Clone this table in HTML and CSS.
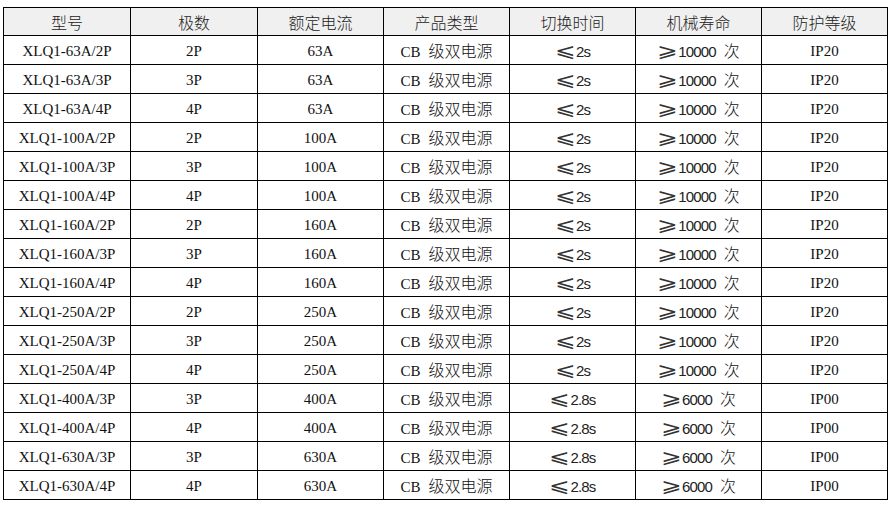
FILE: index.html
```html
<!DOCTYPE html>
<html lang="zh-CN">
<head>
<meta charset="utf-8">
<title>XLQ1 双电源参数表</title>
<link rel="stylesheet" href="styles.css">
</head>
<body>
<table class="spec">
  <colgroup>
    <col class="c1"><col class="c2"><col class="c3"><col class="c4"><col class="c5"><col class="c6"><col class="c7">
  </colgroup>
  <thead>
    <tr><th>型号</th><th>极数</th><th>额定电流</th><th>产品类型</th><th>切换时间</th><th>机械寿命</th><th>防护等级</th></tr>
  </thead>
  <tbody>
    <tr><td class="lat">XLQ1-63A/2P</td><td class="lat">2P</td><td class="lat">63A</td><td><span class="lat">CB</span><span class="gap"></span><span class="zh">级双电源</span></td><td><span class="sym">⩽</span><span class="num">2s</span></td><td><span class="sym">⩾</span><span class="num">10000</span><span class="gap"></span><span class="zh">次</span></td><td class="lat">IP20</td></tr>
    <tr><td class="lat">XLQ1-63A/3P</td><td class="lat">3P</td><td class="lat">63A</td><td><span class="lat">CB</span><span class="gap"></span><span class="zh">级双电源</span></td><td><span class="sym">⩽</span><span class="num">2s</span></td><td><span class="sym">⩾</span><span class="num">10000</span><span class="gap"></span><span class="zh">次</span></td><td class="lat">IP20</td></tr>
    <tr><td class="lat">XLQ1-63A/4P</td><td class="lat">4P</td><td class="lat">63A</td><td><span class="lat">CB</span><span class="gap"></span><span class="zh">级双电源</span></td><td><span class="sym">⩽</span><span class="num">2s</span></td><td><span class="sym">⩾</span><span class="num">10000</span><span class="gap"></span><span class="zh">次</span></td><td class="lat">IP20</td></tr>
    <tr><td class="lat">XLQ1-100A/2P</td><td class="lat">2P</td><td class="lat">100A</td><td><span class="lat">CB</span><span class="gap"></span><span class="zh">级双电源</span></td><td><span class="sym">⩽</span><span class="num">2s</span></td><td><span class="sym">⩾</span><span class="num">10000</span><span class="gap"></span><span class="zh">次</span></td><td class="lat">IP20</td></tr>
    <tr><td class="lat">XLQ1-100A/3P</td><td class="lat">3P</td><td class="lat">100A</td><td><span class="lat">CB</span><span class="gap"></span><span class="zh">级双电源</span></td><td><span class="sym">⩽</span><span class="num">2s</span></td><td><span class="sym">⩾</span><span class="num">10000</span><span class="gap"></span><span class="zh">次</span></td><td class="lat">IP20</td></tr>
    <tr><td class="lat">XLQ1-100A/4P</td><td class="lat">4P</td><td class="lat">100A</td><td><span class="lat">CB</span><span class="gap"></span><span class="zh">级双电源</span></td><td><span class="sym">⩽</span><span class="num">2s</span></td><td><span class="sym">⩾</span><span class="num">10000</span><span class="gap"></span><span class="zh">次</span></td><td class="lat">IP20</td></tr>
    <tr><td class="lat">XLQ1-160A/2P</td><td class="lat">2P</td><td class="lat">160A</td><td><span class="lat">CB</span><span class="gap"></span><span class="zh">级双电源</span></td><td><span class="sym">⩽</span><span class="num">2s</span></td><td><span class="sym">⩾</span><span class="num">10000</span><span class="gap"></span><span class="zh">次</span></td><td class="lat">IP20</td></tr>
    <tr><td class="lat">XLQ1-160A/3P</td><td class="lat">3P</td><td class="lat">160A</td><td><span class="lat">CB</span><span class="gap"></span><span class="zh">级双电源</span></td><td><span class="sym">⩽</span><span class="num">2s</span></td><td><span class="sym">⩾</span><span class="num">10000</span><span class="gap"></span><span class="zh">次</span></td><td class="lat">IP20</td></tr>
    <tr><td class="lat">XLQ1-160A/4P</td><td class="lat">4P</td><td class="lat">160A</td><td><span class="lat">CB</span><span class="gap"></span><span class="zh">级双电源</span></td><td><span class="sym">⩽</span><span class="num">2s</span></td><td><span class="sym">⩾</span><span class="num">10000</span><span class="gap"></span><span class="zh">次</span></td><td class="lat">IP20</td></tr>
    <tr><td class="lat">XLQ1-250A/2P</td><td class="lat">2P</td><td class="lat">250A</td><td><span class="lat">CB</span><span class="gap"></span><span class="zh">级双电源</span></td><td><span class="sym">⩽</span><span class="num">2s</span></td><td><span class="sym">⩾</span><span class="num">10000</span><span class="gap"></span><span class="zh">次</span></td><td class="lat">IP20</td></tr>
    <tr><td class="lat">XLQ1-250A/3P</td><td class="lat">3P</td><td class="lat">250A</td><td><span class="lat">CB</span><span class="gap"></span><span class="zh">级双电源</span></td><td><span class="sym">⩽</span><span class="num">2s</span></td><td><span class="sym">⩾</span><span class="num">10000</span><span class="gap"></span><span class="zh">次</span></td><td class="lat">IP20</td></tr>
    <tr><td class="lat">XLQ1-250A/4P</td><td class="lat">4P</td><td class="lat">250A</td><td><span class="lat">CB</span><span class="gap"></span><span class="zh">级双电源</span></td><td><span class="sym">⩽</span><span class="num">2s</span></td><td><span class="sym">⩾</span><span class="num">10000</span><span class="gap"></span><span class="zh">次</span></td><td class="lat">IP20</td></tr>
    <tr><td class="lat">XLQ1-400A/3P</td><td class="lat">3P</td><td class="lat">400A</td><td><span class="lat">CB</span><span class="gap"></span><span class="zh">级双电源</span></td><td><span class="sym">⩽</span><span class="num">2.8s</span></td><td><span class="sym">⩾</span><span class="num">6000</span><span class="gap"></span><span class="zh">次</span></td><td class="lat">IP00</td></tr>
    <tr><td class="lat">XLQ1-400A/4P</td><td class="lat">4P</td><td class="lat">400A</td><td><span class="lat">CB</span><span class="gap"></span><span class="zh">级双电源</span></td><td><span class="sym">⩽</span><span class="num">2.8s</span></td><td><span class="sym">⩾</span><span class="num">6000</span><span class="gap"></span><span class="zh">次</span></td><td class="lat">IP00</td></tr>
    <tr><td class="lat">XLQ1-630A/3P</td><td class="lat">3P</td><td class="lat">630A</td><td><span class="lat">CB</span><span class="gap"></span><span class="zh">级双电源</span></td><td><span class="sym">⩽</span><span class="num">2.8s</span></td><td><span class="sym">⩾</span><span class="num">6000</span><span class="gap"></span><span class="zh">次</span></td><td class="lat">IP00</td></tr>
    <tr><td class="lat">XLQ1-630A/4P</td><td class="lat">4P</td><td class="lat">630A</td><td><span class="lat">CB</span><span class="gap"></span><span class="zh">级双电源</span></td><td><span class="sym">⩽</span><span class="num">2.8s</span></td><td><span class="sym">⩾</span><span class="num">6000</span><span class="gap"></span><span class="zh">次</span></td><td class="lat">IP00</td></tr>
  </tbody>
</table>
</body>
</html>
```

FILE: styles.css
```css
html, body {
  margin: 0;
  padding: 0;
  background: #ffffff;
}

.spec {
  margin: 7px 0 0 3px;
  border-collapse: collapse;
  table-layout: fixed;
  width: 885px;
  color: #000000;
  font-family: "Noto Sans CJK SC", sans-serif;
  font-size: 16px;
}

.c1, .c2 { width: 127px; }
.c3, .c4, .c5, .c6, .c7 { width: 126px; }

.spec th,
.spec td {
  border: 1px solid #000000;
  padding: 0;
  text-align: center;
  vertical-align: middle;
  white-space: nowrap;
  line-height: 16px;
}

.spec thead tr { height: 28px; }
.spec tbody tr { height: 29px; }

.spec th {
  background: #f0f0f0;
  font-weight: 300;
  font-size: 16px;
  color: #222222;
}

.spec td { padding-top: 2px; }

.lat {
  font-family: "Liberation Serif", "Times New Roman", serif;
  font-size: 15px;
  color: #111111;
}

.gap {
  display: inline-block;
  width: 8px;
}

.zh {
  font-family: "Noto Sans CJK SC", sans-serif;
  font-weight: 300;
  font-size: 16px;
  color: #111111;
}

.sym {
  display: inline-block;
  font-family: "DejaVu Sans", sans-serif;
  font-size: 19px;
  font-weight: 300;
  color: #333333;
  transform: scaleX(1.3);
  margin: 0 3px 0 2px;
}

.num {
  font-family: "Liberation Sans", Arial, sans-serif;
  font-size: 15px;
  letter-spacing: -0.8px;
  color: #222222;
}
```
